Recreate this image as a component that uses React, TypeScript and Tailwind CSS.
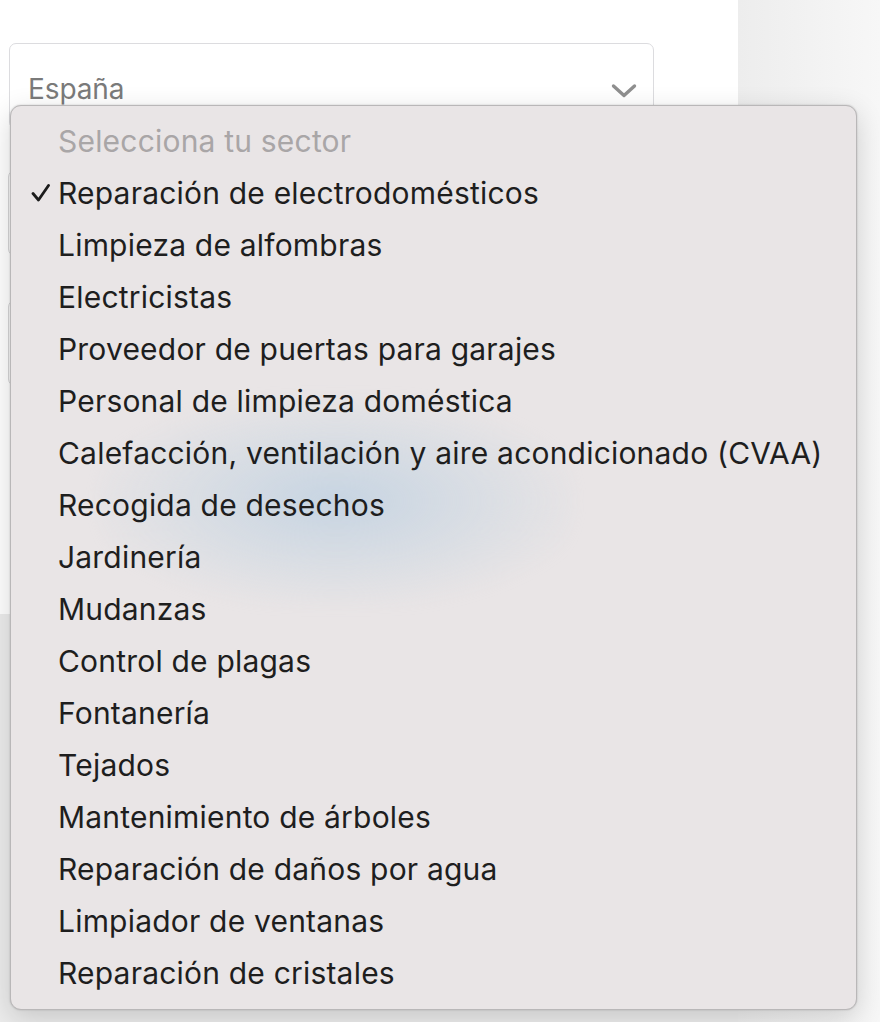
import React from "react";

const sectors = [
  "Reparación de electrodomésticos",
  "Limpieza de alfombras",
  "Electricistas",
  "Proveedor de puertas para garajes",
  "Personal de limpieza doméstica",
  "Calefacción, ventilación y aire acondicionado (CVAA)",
  "Recogida de desechos",
  "Jardinería",
  "Mudanzas",
  "Control de plagas",
  "Fontanería",
  "Tejados",
  "Mantenimiento de árboles",
  "Reparación de daños por agua",
  "Limpiador de ventanas",
  "Reparación de cristales",
];

const font = { fontFamily: 'Inter, "Noto Sans", "Liberation Sans", sans-serif' };

function Check() {
  return (
    <svg width="20" height="18" viewBox="0 0 20 18" className="shrink-0">
      <path d="M2 9.5 L7.5 16 L17.5 1.5" fill="none" stroke="#1c1c1c" strokeWidth="2.8" strokeLinecap="round" strokeLinejoin="round" />
    </svg>
  );
}

export default function App() {
  return (
    <div className="relative w-[880px] h-[1022px] overflow-hidden bg-white" style={font}>
      {/* page behind the popup */}
      <div className="flex h-full">
        <div className="w-[738px] flex flex-col">
          <div className="ml-[9px] mt-[43px] w-[645px] h-[86px] rounded-[7px] border border-[#dcdcdf] bg-white flex items-end pb-[25px] pl-[18px] pr-[16px] justify-between">
            <span className="text-[28px] leading-none text-[#7a7a7a] tracking-[-0.1px]">España</span>
            <svg width="26" height="16" viewBox="0 0 26 16" className="mb-[4px]">
              <path d="M2.5 3 L13 12.5 L23.5 3" fill="none" stroke="#8f8f8f" strokeWidth="3.4" strokeLinecap="round" strokeLinejoin="round" />
            </svg>
          </div>
          <div className="ml-[8px] mt-[41px] w-[645px] h-[86px] rounded-[7px] border border-[#d6d6d8] bg-white" />
          <div className="ml-[8px] mt-[44px] w-[645px] h-[86px] rounded-[7px] border border-[#d6d6d8] bg-white" />
          <div className="mt-[228px] flex-1 bg-[#ececec]" />
        </div>
        <div className="flex-1 bg-gradient-to-r from-[#ededed] to-[#f7f7f7]" />
      </div>

      {/* native select popup */}
      <div className="absolute left-[10px] top-[105px] w-[847px] h-[905px] rounded-[11px] border border-[#b9b7b8] bg-[#e9e5e6] shadow-[0_8px_28px_rgba(0,0,0,0.16),0_0_2px_rgba(0,0,0,0.2)] overflow-hidden">
        <div className="absolute left-[85px] top-[290px] w-[480px] h-[210px] rounded-full bg-[radial-gradient(ellipse_at_center,rgba(190,208,225,0.8)_0%,rgba(205,216,226,0.5)_45%,rgba(233,229,230,0)_75%)] blur-[6px]" />
        <ul className="relative pt-[9px]">
          <li className="h-[52px] flex items-center pl-[47px] text-[30px] tracking-[0.2px] text-[#a9a6a7]">
            Selecciona tu sector
          </li>
          {sectors.map((s, i) => (
            <li key={s} className="h-[52px] flex items-center text-[30px] tracking-[0.2px] text-[#1e1e1e]">
              <span className="w-[47px] flex justify-end pr-[7px]">{i === 0 ? <Check /> : null}</span>
              <span>{s}</span>
            </li>
          ))}
        </ul>
      </div>
    </div>
  );
}
